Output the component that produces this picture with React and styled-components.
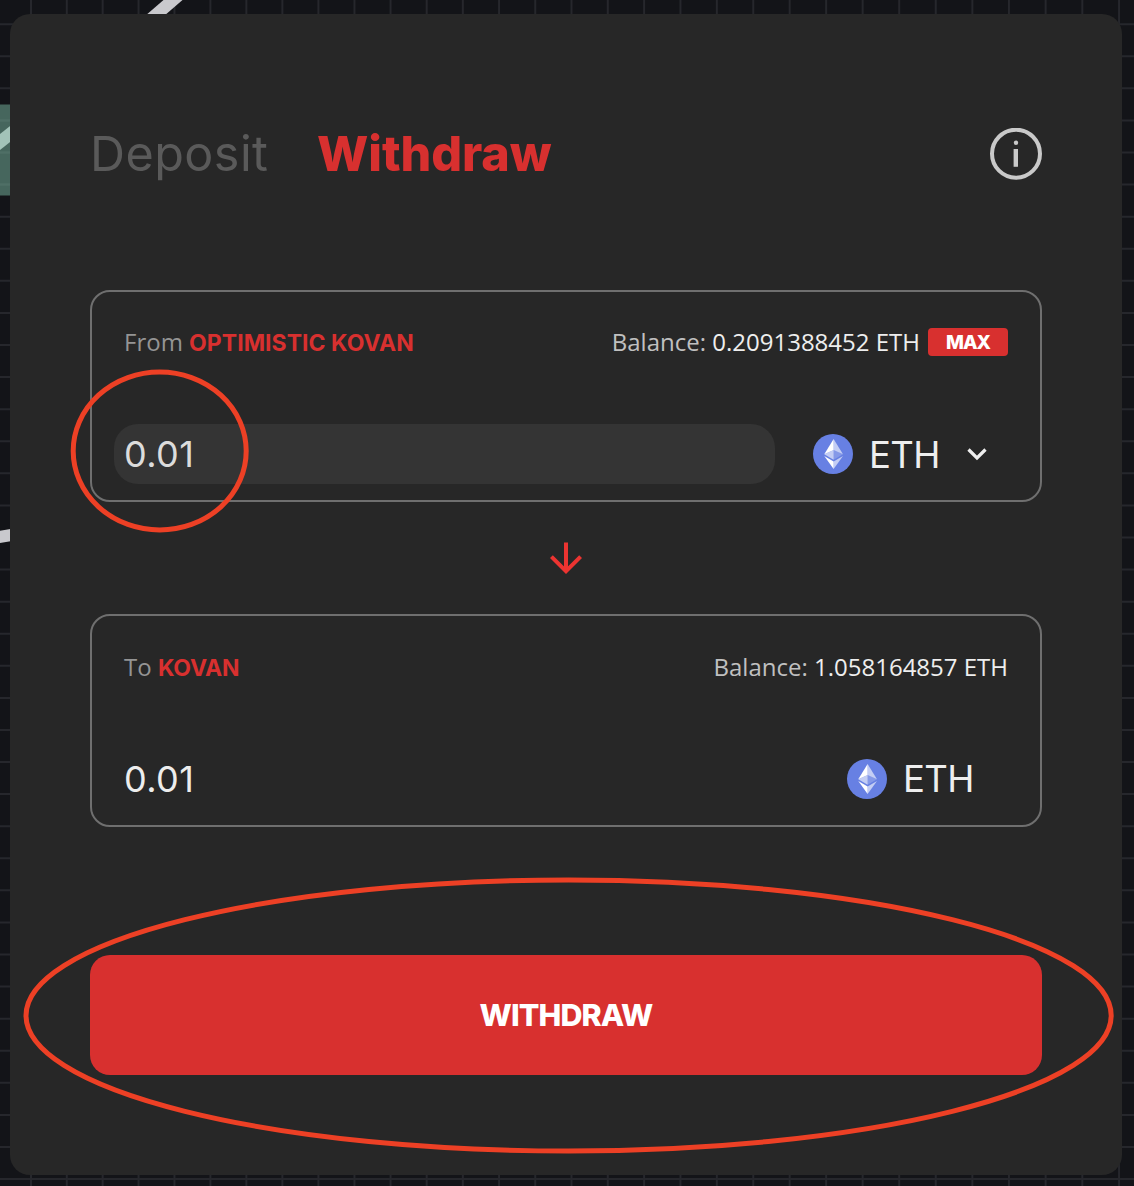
import React from "react";
import styled, { createGlobalStyle } from "styled-components";

const Global = createGlobalStyle`
  *, *::before, *::after { box-sizing: border-box; }
  body { margin: 0; background: #131418; }
`;

const heading = '"Inter", "Liberation Sans", sans-serif';
const body = '"Open Sans", "Noto Sans", sans-serif';

const Page = styled.main`
  position: relative;
  width: 1134px;
  height: 1186px;
  padding: 14px 12px 11px 10px;
  overflow: hidden;
  background: #131418;
  font-family: ${body};
`;

const Backdrop = styled.svg`
  position: absolute;
  inset: 0;
`;

const Annotations = styled.svg`
  position: absolute;
  inset: 0;
  pointer-events: none;
`;

const Card = styled.section`
  position: relative;
  display: flex;
  flex-direction: column;
  height: 1161px;
  padding: 109px 80px 100px;
  border-radius: 20px;
  background: #272727;
`;

const Header = styled.header`
  display: flex;
  align-items: center;
  height: 61px;
  margin-bottom: 106px;
`;

const Tab = styled.button`
  padding: 0;
  border: 0;
  background: none;
  margin-right: ${(p) => (p.$active ? "auto" : "49px")};
  width: ${(p) => (p.$active ? "auto" : "178px")};
  text-align: left;
  white-space: nowrap;
  color: ${(p) => (p.$active ? "#d8302f" : "#5a5a5a")};
  font-family: ${heading};
  font-size: 48.5px;
  line-height: 61px;
  font-weight: ${(p) => (p.$active ? 800 : 400)};
  letter-spacing: ${(p) => (p.$active ? "-0.1px" : "0.45px")};
`;

const Panel = styled.div`
  display: flex;
  flex-direction: column;
  justify-content: space-between;
  height: ${(p) => p.$height}px;
  padding: ${(p) => p.$top}px 32px 16px;
  border: 2px solid #6f6f6f;
  border-radius: 20px;
`;

const PanelTop = styled.div`
  display: flex;
  align-items: center;
  justify-content: space-between;
  height: 36px;
`;

const Label = styled.div`
  font-size: 24px;
  line-height: 36px;
  white-space: nowrap;
  color: #949494;
`;

const Network = styled.strong`
  font-family: ${heading};
  font-size: 23px;
  font-weight: 700;
  letter-spacing: ${(p) => p.$tracking}px;
  color: #d8302f;
`;

const Balance = styled.div`
  display: flex;
  align-items: center;
  gap: 8px;
  font-size: 24px;
  line-height: 36px;
  white-space: nowrap;
  color: #c0c0c0;
`;

const Amount = styled.span`
  color: #eeeeee;
`;

const MaxButton = styled.button`
  width: 80px;
  height: 28px;
  padding: 1px 0 0;
  border: 0;
  border-radius: 4px;
  background: #d8302f;
  color: #fff;
  font-family: ${heading};
  font-size: 19px;
  line-height: 28px;
  font-weight: 800;
  letter-spacing: -1px;
`;

const PanelBottom = styled.div`
  display: flex;
  align-items: center;
  justify-content: space-between;
  height: 60px;
  margin-left: -10px;
`;

const Field = styled.div`
  width: 661px;
  height: 60px;
  padding-left: 10px;
  border-radius: 24px;
  background: ${(p) => (p.$editable ? "#343434" : "transparent")};
  color: ${(p) => (p.$editable ? "#dcdcdc" : "#ededed")};
  font-family: ${heading};
  font-size: 36px;
  line-height: 61px;
  letter-spacing: 0.4px;
`;

const Token = styled.div`
  display: flex;
  align-items: center;
  margin-right: ${(p) => p.$inset}px;
  color: #eeeeee;
  font-family: ${heading};
  font-size: 36.5px;
  line-height: 60px;
`;

const TokenName = styled.span`
  width: 70px;
  margin-left: 16px;
  padding-top: ${(p) => p.$drop}px;
  letter-spacing: -0.6px;
  white-space: nowrap;
`;

const Chevron = styled.svg`
  margin-left: 28px;
`;

const Direction = styled.div`
  display: flex;
  justify-content: center;
  height: 112px;
  padding-top: 40px;
`;

const Submit = styled.button`
  height: 120px;
  margin-top: 128px;
  padding: 0;
  border: 0;
  border-radius: 20px;
  background: #d8302f;
  color: #fff;
  font-family: ${heading};
  font-size: 30.5px;
  line-height: 120px;
  font-weight: 800;
  letter-spacing: -0.9px;
`;

const columns = Array.from({ length: 31 }, (_, n) => 31 + 35.8 * n + 0.0156 * n * n);
const rows = Array.from({ length: 37 }, (_, n) => 24.2 + 32.08 * n);

function Grid() {
  return (
    <Backdrop width="1134" height="1186" aria-hidden="true">
      <g stroke="#26272c" strokeWidth="2">
        {rows.map((y) => <line key={y} x1="0" x2="1134" y1={y} y2={y} />)}
        {columns.map((x) => <line key={x} x1={x} x2={x} y1="0" y2="1186" />)}
      </g>
      <rect x="-2" y="104.5" width="20" height="91" fill="#46665d" />
      <path d="M0 120.5H10M0 152.5H10M0 184.5H10" stroke="#4f6f66" strokeWidth="2.5" />
      <path d="M0 134L12 124.4V140.4L0 150Z" fill="#a2c3b8" />
      <path d="M145 16L163.5 0H182.5L164 16Z" fill="#c9c9cd" />
      <path d="M0 530.7L12 528.7V541L0 543Z" fill="#c9c9cd" />
    </Backdrop>
  );
}

function InfoIcon() {
  return (
    <svg width="52" height="52" viewBox="0 0 52 52" fill="none">
      <circle cx="26" cy="25.7" r="24" stroke="#c9c9c9" strokeWidth="4" />
      <circle cx="26" cy="14.7" r="2.2" fill="#c9c9c9" />
      <path d="M25.8 21V38.8" stroke="#c9c9c9" strokeWidth="4.4" />
    </svg>
  );
}

function EthIcon() {
  return (
    <svg width="40" height="40" viewBox="0 0 32 32">
      <circle cx="16" cy="16" r="16" fill="#6780e3" />
      <g fill="#fff">
        <path fillOpacity=".602" d="M16.498 4v8.87l7.497 3.35z" />
        <path d="M16.498 4L9 16.22l7.498-3.35z" />
        <path fillOpacity=".602" d="M16.498 21.968v6.027L24 17.616z" />
        <path d="M16.498 27.995v-6.028L9 17.616z" />
        <path fillOpacity=".2" d="M16.498 20.573l7.497-4.353-7.497-3.348z" />
        <path fillOpacity=".602" d="M9 16.22l7.498 4.353v-7.701z" />
      </g>
    </svg>
  );
}

export default function App() {
  return (
    <>
      <Global />
      <Page>
        <Grid />
        <Card>
          <Header>
            <Tab>Deposit</Tab>
            <Tab $active>Withdraw</Tab>
            <InfoIcon />
          </Header>

          <Panel $height={212} $top={32}>
            <PanelTop>
              <Label>From <Network $tracking={0.03}>OPTIMISTIC KOVAN</Network></Label>
              <Balance>
                <span>Balance: <Amount>0.2091388452 ETH</Amount></span>
                <MaxButton>MAX</MaxButton>
              </Balance>
            </PanelTop>
            <PanelBottom>
              <Field $editable>0.01</Field>
              <Token $inset={21}>
                <EthIcon />
                <TokenName $drop={2}>ETH</TokenName>
                <Chevron width="20" height="14" viewBox="0 0 20 14" fill="none">
                  <path d="M1.5 2.5L10 11L18.5 2.5" stroke="#eeeeee" strokeWidth="3.2" />
                </Chevron>
              </Token>
            </PanelBottom>
          </Panel>

          <Direction>
            <svg width="32" height="32" viewBox="0 0 32 32" fill="none">
              <path d="M16 .5V29M1.4 14.6L16 29.2L30.6 14.6" stroke="#ec3431" strokeWidth="4" />
            </svg>
          </Direction>

          <Panel $height={213} $top={33}>
            <PanelTop>
              <Label>To <Network $tracking={-0.2}>KOVAN</Network></Label>
              <Balance>
                <span>Balance: <Amount>1.058164857 ETH</Amount></span>
              </Balance>
            </PanelTop>
            <PanelBottom>
              <Field>0.01</Field>
              <Token $inset={35}>
                <EthIcon />
                <TokenName $drop={0}>ETH</TokenName>
              </Token>
            </PanelBottom>
          </Panel>

          <Submit>WITHDRAW</Submit>
        </Card>
        <Annotations width="1134" height="1186" fill="none" stroke="#ed4025" strokeWidth="5" aria-hidden="true">
          <ellipse cx="159.7" cy="451" rx="86.5" ry="79" />
          <ellipse cx="568.6" cy="1015.5" rx="542.6" ry="135.5" />
        </Annotations>
      </Page>
    </>
  );
}
